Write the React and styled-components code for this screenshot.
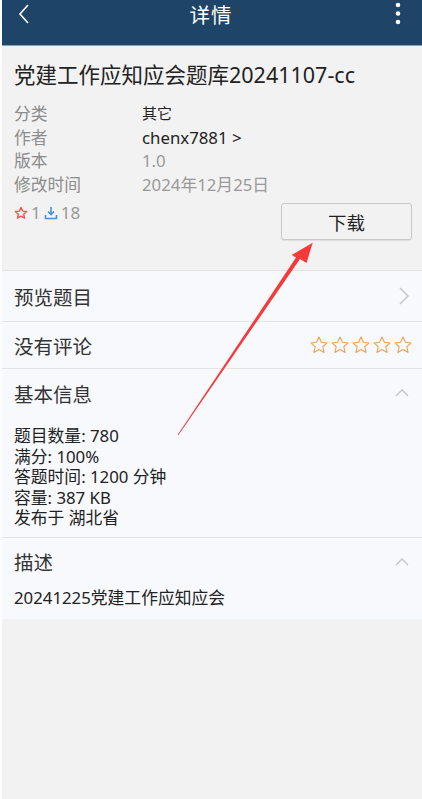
import React from "react";
import styled, { createGlobalStyle } from "styled-components";

const Global = createGlobalStyle`
  html, body { margin: 0; padding: 0; }
  body {
    background: #ffffff;
    font-family: "Noto Sans", "Noto Sans CJK SC", sans-serif;
  }
`;

const Screen = styled.div`
  position: relative;
  margin-left: 2px;
  min-height: 799px;
  background: #f2f2f2;
  overflow: hidden;
`;

const Header = styled.div`
  height: 45px;
  background: #1e4467;
  border-bottom: 1px solid #8aa4bd;
  display: flex;
  align-items: center;
  justify-content: space-between;
  padding: 0 12px 0 10px;
  color: #fff;
`;

const HeaderTitle = styled.div`
  font-size: 20.5px;
  margin-top: -18px;
  letter-spacing: 1px;
`;

const HeaderIcon = styled.div`
  width: 24px;
  height: 30px;
  margin-top: -17px;
  display: flex;
  align-items: center;
  justify-content: center;
`;

const Top = styled.div`
  padding: 14px 12px 30px 12px;
`;

const Title = styled.div`
  font-size: 21.5px;
  color: #222;
  line-height: 30px;
  margin-bottom: 12px;
`;

const MetaRow = styled.div`
  display: flex;
  font-size: 16.8px;
  line-height: 23.6px;
`;

const MetaLabel = styled.div`
  width: 128px;
  color: #8c8c8c;
`;

const MetaValue = styled.div`
  color: ${(p) => (p.dark ? "#222" : "#999")};
  font-size: ${(p) => (p.small ? "15px" : "16.8px")};
`;

const StatsRow = styled.div`
  display: flex;
  justify-content: space-between;
  align-items: flex-start;
  margin-top: 5px;
`;

const Stats = styled.div`
  display: flex;
  align-items: center;
  gap: 3px;
  font-size: 17px;
  color: #999;
  line-height: 24px;
`;

const DownloadButton = styled.button`
  width: 131px;
  height: 37px;
  margin-top: 2px;
  margin-right: -2px;
  border: 1px solid #c9c9c9;
  border-radius: 3px;
  background: #f2f2f2;
  font-family: inherit;
  font-size: 18.5px;
  color: #222;
  box-shadow: 0 1px 1px rgba(0, 0, 0, 0.08);
`;

const Card = styled.div`
  background: #f8f9fd;
  border-top: 1px solid #e4e4e4;
`;

const Row = styled.div`
  display: flex;
  align-items: center;
  justify-content: space-between;
  height: ${(p) => p.h || 50}px;
  padding: 0 12px;
  border-bottom: 1px solid #e4e4e4;
  font-size: 19.5px;
  color: #333;
`;

const Section = styled.div`
  padding: 0 12px ${(p) => (p.last ? 11 : 8)}px 12px;
  border-bottom: ${(p) => (p.last ? "none" : "1px solid #e4e4e4")};
`;

const SectionHead = styled.div`
  display: flex;
  align-items: center;
  justify-content: space-between;
  height: 48px;
  margin-bottom: ${(p) => p.gap || 0}px;
  font-size: 19.5px;
  color: #333;
`;

const InfoLine = styled.div`
  font-size: 16.8px;
  line-height: 20.5px;
  color: #222;
`;

const Stars = styled.div`
  display: flex;
  gap: 1px;
  margin-right: -3px;
`;

const Arrow = styled.svg`
  position: absolute;
  left: 0;
  top: 0;
  pointer-events: none;
`;

const StarIcon = ({ size = 20, color = "#f0a050", width = 1.3 }) => (
  <svg width={size} height={size} viewBox="0 0 24 24">
    <path
      d="M12 2.5l2.9 6.3 6.8.7-5.1 4.6 1.5 6.8L12 17.4l-6.1 3.5 1.5-6.8-5.1-4.6 6.8-.7z"
      fill="none"
      stroke={color}
      strokeWidth={width}
      strokeLinejoin="round"
    />
  </svg>
);

const UpCaret = () => (
  <svg width="16" height="10" viewBox="0 0 16 10">
    <path d="M2 8l6-6 6 6" fill="none" stroke="#c4c4c4" strokeWidth="1.3" />
  </svg>
);

export default function App() {
  return (
    <>
      <Global />
      <Screen>
        <Header>
          <HeaderIcon>
            <svg width="14" height="22" viewBox="0 0 14 22">
              <path d="M11 2L3 11l8 9" fill="none" stroke="#fff" strokeWidth="1.6" />
            </svg>
          </HeaderIcon>
          <HeaderTitle>详情</HeaderTitle>
          <HeaderIcon>
            <svg width="6" height="24" viewBox="0 0 6 24">
              <circle cx="3" cy="3" r="2.3" fill="#fff" />
              <circle cx="3" cy="11.5" r="2.3" fill="#fff" />
              <circle cx="3" cy="20" r="2.3" fill="#fff" />
            </svg>
          </HeaderIcon>
        </Header>

        <Top>
          <Title>党建工作应知应会题库20241107-cc</Title>
          <MetaRow>
            <MetaLabel>分类</MetaLabel>
            <MetaValue dark small>其它</MetaValue>
          </MetaRow>
          <MetaRow>
            <MetaLabel>作者</MetaLabel>
            <MetaValue dark>chenx7881 &gt;</MetaValue>
          </MetaRow>
          <MetaRow>
            <MetaLabel>版本</MetaLabel>
            <MetaValue>1.0</MetaValue>
          </MetaRow>
          <MetaRow>
            <MetaLabel>修改时间</MetaLabel>
            <MetaValue>2024年12月25日</MetaValue>
          </MetaRow>
          <StatsRow>
            <Stats>
              <StarIcon size={14} color="#f25454" width={2.4} />
              <span>1</span>
              <svg width="14" height="14" viewBox="0 0 14 14">
                <path d="M7 1v7M4 5.5L7 8.5l3-3" fill="none" stroke="#4d8fd4" strokeWidth="1.6" />
                <path d="M1.5 9v3.5h11V9" fill="none" stroke="#4d8fd4" strokeWidth="1.6" />
              </svg>
              <span>18</span>
            </Stats>
            <DownloadButton>下载</DownloadButton>
          </StatsRow>
        </Top>

        <Card>
          <Row h={50}>
            <span>预览题目</span>
            <svg width="12" height="20" viewBox="0 0 12 20">
              <path d="M2 2l8 8-8 8" fill="none" stroke="#c4c4c4" strokeWidth="1.4" />
            </svg>
          </Row>
          <Row h={46}>
            <span>没有评论</span>
            <Stars>
              {[0, 1, 2, 3, 4].map((i) => (
                <StarIcon key={i} />
              ))}
            </Stars>
          </Row>
          <Section>
            <SectionHead gap={9}>
              <span>基本信息</span>
              <UpCaret />
            </SectionHead>
            <InfoLine>题目数量: 780</InfoLine>
            <InfoLine>满分: 100%</InfoLine>
            <InfoLine>答题时间: 1200 分钟</InfoLine>
            <InfoLine>容量: 387 KB</InfoLine>
            <InfoLine>发布于 湖北省</InfoLine>
          </Section>
          <Section last>
            <SectionHead gap={2}>
              <span>描述</span>
              <UpCaret />
            </SectionHead>
            <InfoLine>20241225党建工作应知应会</InfoLine>
          </Section>
        </Card>

        <Arrow width="420" height="799" viewBox="0 0 420 799">
          <polygon
            points="175.5,435 176.5,435 298,259 304.5,263 310.7,242.7 289.7,255 294,257.5"
            fill="#f63a3a"
          />
        </Arrow>
      </Screen>
    </>
  );
}
